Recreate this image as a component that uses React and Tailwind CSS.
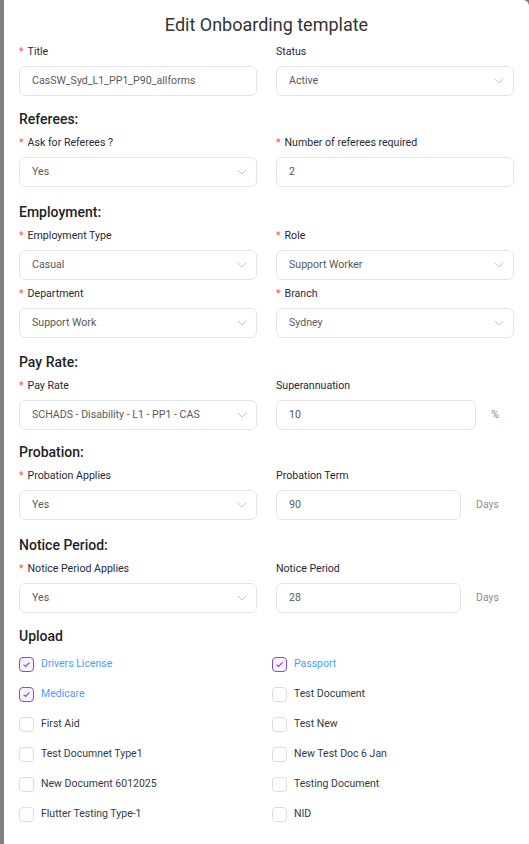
import React from "react";

const font = { fontFamily: "Roboto, 'Liberation Sans', sans-serif" };

function Chevron() {
  return (
    <svg width="10" height="6" viewBox="0 0 10 6" className="shrink-0">
      <path d="M1 1 L5 5 L9 1" fill="none" stroke="#c4c4c4" strokeWidth="1" />
    </svg>
  );
}

function Label({ children, required }) {
  return (
    <div className="h-[16px] leading-[16px] text-[10.6px] text-[#1f2937] flex items-center whitespace-nowrap">
      {required && <span className="text-[#ff4d4f] mr-[4px]">*</span>}
      <span>{children}</span>
    </div>
  );
}

function Input({ value, select, className = "" }) {
  return (
    <div
      className={
        "h-[30px] mt-[6px] border border-[#e3e5ea] rounded-[6px] bg-white flex items-center justify-between pl-[12px] pr-[9px] text-[10.6px] text-[#595959] whitespace-nowrap " +
        className
      }
    >
      <span>{value}</span>
      {select && <Chevron />}
    </div>
  );
}

function Field({ label, required, value, select, suffix, inputW }) {
  return (
    <div>
      <Label required={required}>{label}</Label>
      {suffix ? (
        <div className="flex items-center">
          <Input value={value} select={select} className={inputW} />
          <span className="mt-[6px] text-[10.5px] text-[#8c8c8c] ml-auto mr-[15px]">{suffix}</span>
        </div>
      ) : (
        <Input value={value} select={select} />
      )}
    </div>
  );
}

function Heading({ children, className = "" }) {
  return (
    <div className={"h-[22px] leading-[22px] text-[14px] font-medium text-[#1f1f1f] " + className}>
      {children}
    </div>
  );
}

function Check({ label, checked }) {
  return (
    <div className="flex items-center h-[30px]">
      <div
        className={
          "w-[15px] h-[15px] rounded-[4px] border flex items-center justify-center shrink-0 " +
          (checked ? "border-[#7d4fd8] bg-[#f7f3ff]" : "border-[#dcdde3] bg-white")
        }
      >
        {checked && (
          <svg width="9" height="7" viewBox="0 0 9 7">
            <path d="M1.5 3.6 L3.6 5.5 L7.5 1.5" fill="none" stroke="#7d4fd8" strokeWidth="1.1" />
          </svg>
        )}
      </div>
      <span className={"ml-[7px] text-[10.5px] " + (checked ? "text-[#4c9dfa]" : "text-[#333a44]")}>
        {label}
      </span>
    </div>
  );
}

export default function App() {
  return (
    <div style={font} className="w-[529px] h-[844px] bg-[#7f7f7f] pl-[4px] overflow-hidden">
      <div className="bg-white h-full rounded-tr-[6px] px-[15px]">
        <div className="h-[50px] pt-[11px] text-center text-[18px] leading-[28px] text-[#333333]">
          Edit Onboarding template
        </div>
        <div className="-mt-[6px] grid grid-cols-2 gap-x-[19px]">
          <Field label="Title" required value="CasSW_Syd_L1_PP1_P90_allforms" />
          <Field label="Status" value="Active" select />
        </div>

        <Heading className="mt-[12px]">Referees:</Heading>
        <div className="mt-[5px] grid grid-cols-2 gap-x-[19px]">
          <Field label="Ask for Referees ?" required value="Yes" select />
          <Field label="Number of referees required" required value="2" />
        </div>

        <Heading className="mt-[14px]">Employment:</Heading>
        <div className="mt-[5px] grid grid-cols-2 gap-x-[19px] gap-y-[6px]">
          <Field label="Employment Type" required value="Casual" select />
          <Field label="Role" required value="Support Worker" select />
          <Field label="Department" required value="Support Work" select />
          <Field label="Branch" required value="Sydney" select />
        </div>

        <Heading className="mt-[13px]">Pay Rate:</Heading>
        <div className="mt-[5px] grid grid-cols-2 gap-x-[19px]">
          <Field label="Pay Rate" required value="SCHADS - Disability - L1 - PP1 - CAS" select />
          <Field label="Superannuation" value="10" suffix="%" inputW="w-[200px]" />
        </div>

        <Heading className="mt-[11px]">Probation:</Heading>
        <div className="mt-[5px] grid grid-cols-2 gap-x-[19px]">
          <Field label="Probation Applies" required value="Yes" select />
          <Field label="Probation Term" value="90" suffix="Days" inputW="w-[185px]" />
        </div>

        <Heading className="mt-[14px]">Notice Period:</Heading>
        <div className="mt-[5px] grid grid-cols-2 gap-x-[19px]">
          <Field label="Notice Period Applies" required value="Yes" select />
          <Field label="Notice Period" value="28" suffix="Days" inputW="w-[185px]" />
        </div>

        <Heading className="mt-[12px]">Upload</Heading>
        <div className="mt-[2px] grid grid-cols-2 gap-x-[11px]">
          <Check label="Drivers License" checked />
          <Check label="Passport" checked />
          <Check label="Medicare" checked />
          <Check label="Test Document" />
          <Check label="First Aid" />
          <Check label="Test New" />
          <Check label="Test Documnet Type1" />
          <Check label="New Test Doc 6 Jan" />
          <Check label="New Document 6012025" />
          <Check label="Testing Document" />
          <Check label="Flutter Testing Type-1" />
          <Check label="NID" />
        </div>
      </div>
    </div>
  );
}
